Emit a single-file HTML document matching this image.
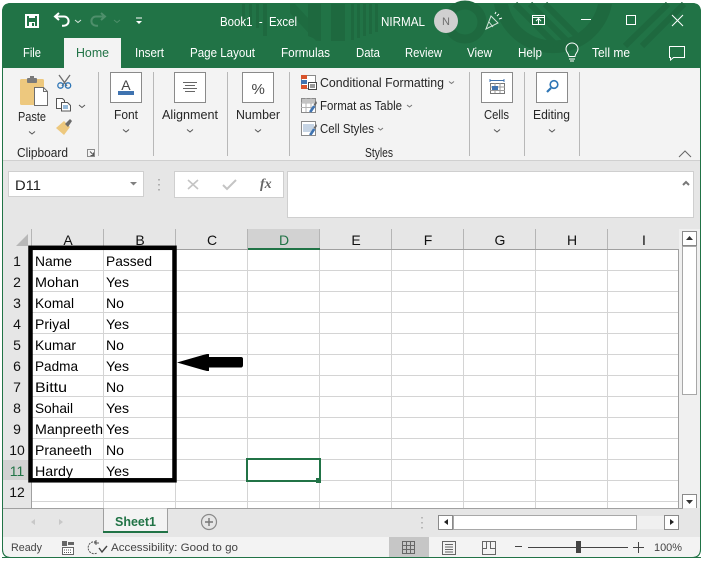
<!DOCTYPE html>
<html><head><meta charset="utf-8"><style>
html,body{margin:0;padding:0;background:#fff;width:703px;height:564px;overflow:hidden}
svg{display:block}
text{font-family:"Liberation Sans",sans-serif;white-space:pre}
.t{fill:#fff;font-size:12.5px}
.r{fill:#262626;font-size:12.5px}
.c{fill:#000;font-size:14px}
.h{fill:#111;font-size:14px}
.ln{stroke:#d4d4d4;stroke-width:1}
.box{fill:#fff;stroke:#8a8a8a;stroke-width:1}
.chev{fill:none;stroke:#555;stroke-width:1}
</style></head><body>
<svg width="703" height="564" viewBox="0 0 703 564" xmlns="http://www.w3.org/2000/svg">
<rect width="703" height="564" fill="#fff"/>
<path d="M2.5 12Q2.5 3.5 11 3.5H692Q700.5 3.5 700.5 12V549Q700.5 557.5 692 557.5H11Q2.5 557.5 2.5 549Z" fill="#e6e6e6" stroke="#217346"/>
<path d="M2 12Q2 3 11 3H692Q701 3 701 12V68H2Z" fill="#217346"/>
<!-- title pattern -->
<g fill="#1e693f">
<rect x="242" y="4" width="3" height="20"/><rect x="249" y="4" width="3" height="22"/><rect x="256" y="4" width="3" height="24"/><rect x="263" y="4" width="4" height="32"/>
<path d="M290 4h5l25 27v10h-4L290 13Z" opacity=".8"/>
<path d="M308 4h13v37l-13-5Z"/><path d="M331 4h14v37h-14Z"/>
<rect x="351" y="4" width="3" height="36"/><rect x="357" y="4" width="3" height="34"/><rect x="363" y="4" width="3" height="32"/><rect x="369" y="4" width="3" height="30"/><rect x="375" y="4" width="3" height="28"/>
</g>
<circle cx="465" cy="22" r="17" fill="none" stroke="#1e693f" stroke-width="9"/>
<path d="M494 4A60 60 0 0 0 612 4H598A46 46 0 0 1 508 4Z" fill="#1e693f"/>
<g stroke="#1e693f" stroke-width="6" fill="none"><path d="M515 4L556 45M530 4L568 42M545 4L576 35"/><path d="M625 46L668 4M642 46L684 4"/></g>
<!-- QAT -->
<rect x="26" y="15" width="12" height="12" fill="none" stroke="#fff" stroke-width="2"/>
<rect x="29" y="15" width="6" height="3" fill="#fff"/><rect x="29" y="22" width="6" height="5" fill="#fff"/><rect x="32" y="23" width="2" height="3" fill="#217346"/>
<path d="M55 16.500h9a4.600 4.600 0 0 1 0 9.200h-2M59 13l-4 3.500 4 3.500" fill="none" stroke="#fff" stroke-width="2"/>
<path d="M75 20l3 2.500 3-2.500" fill="none" stroke="#d8e6dd"/>
<path d="M105 16.500h-9a4.600 4.600 0 0 0 0 9.200h2M101 13l4 3.500-4 3.500" fill="none" stroke="#4e8f6b" stroke-width="2"/>
<path d="M114 20l3 2.500 3-2.500" fill="none" stroke="#4e8f6b"/>
<path d="M136 18h6" stroke="#fff"/><path d="M136 21h6l-3 3z" fill="#fff"/>
<text x="220" y="26" class="t" textLength="77" lengthAdjust="spacingAndGlyphs">Book1  -  Excel</text>
<text x="381" y="26" class="t" textLength="44" lengthAdjust="spacingAndGlyphs">NIRMAL</text>
<circle cx="446" cy="21" r="12" fill="#d0d0d0"/><text x="442" y="25" fill="#6e6e6e" style="font-size:11px">N</text>
<g fill="none" stroke="#d7e5dc" stroke-width="1"><path d="M486 29l5-13 7 7zM489 22l4 5M492 17l4 4"/></g><path d="M497 16l2-2M499 19l3-1M495 14l1-2" stroke="#fff" fill="none"/>
<g fill="none" stroke="#fff"><rect x="532.500" y="15.500" width="12" height="9"/><path d="M532 17.500h13M538.500 24v-5M536 21l2.500-2.500 2.500 2.500"/></g>
<path d="M581 19.500h10" stroke="#fff"/><rect x="626.500" y="15.500" width="9" height="9" fill="none" stroke="#fff" stroke-width="1"/>
<path d="M672 15l11 11M683 15l-11 11" stroke="#fff" fill="none"/>
<!-- tabs -->
<rect x="64" y="38" width="57" height="30" fill="#f3f3f3"/>
<text x="23" y="57" class="t" textLength="18" lengthAdjust="spacingAndGlyphs">File</text>
<text x="76" y="57" class="t" style="fill:#217346" textLength="33" lengthAdjust="spacingAndGlyphs">Home</text>
<text x="135" y="57" class="t" textLength="29" lengthAdjust="spacingAndGlyphs">Insert</text>
<text x="190" y="57" class="t" textLength="65" lengthAdjust="spacingAndGlyphs">Page Layout</text>
<text x="281" y="57" class="t" textLength="49" lengthAdjust="spacingAndGlyphs">Formulas</text>
<text x="356" y="57" class="t" textLength="24" lengthAdjust="spacingAndGlyphs">Data</text>
<text x="405" y="57" class="t" textLength="37" lengthAdjust="spacingAndGlyphs">Review</text>
<text x="467" y="57" class="t" textLength="25" lengthAdjust="spacingAndGlyphs">View</text>
<text x="518" y="57" class="t" textLength="24" lengthAdjust="spacingAndGlyphs">Help</text>
<path d="M569 56.500c0-3-3-4-3-7.500a6 6 0 0 1 12 0c0 3.500-3 4.500-3 7.500zM569 59h6M570 61h4" fill="none" stroke="#fff"/>
<text x="592" y="57" class="t" textLength="38" lengthAdjust="spacingAndGlyphs">Tell me</text>
<path d="M669.500 46.500h15v11h-11l-3 2.500v-2.500h-1z" fill="none" stroke="#fff"/>
<!-- ribbon -->
<rect x="3" y="68" width="697" height="92" fill="#f3f3f3"/>
<rect x="3" y="160" width="697" height="1" fill="#d0d0d0"/>
<g fill="#b8b8b8"><rect x="98" y="72" width="1" height="84"/><rect x="153" y="72" width="1" height="84"/><rect x="227" y="72" width="1" height="84"/><rect x="289" y="72" width="1" height="84"/><rect x="469" y="72" width="1" height="84"/><rect x="524" y="72" width="1" height="84"/><rect x="579" y="72" width="1" height="84"/></g>
<!-- clipboard -->
<rect x="20" y="79" width="24" height="26" rx="1.500" fill="#edc87e"/>
<rect x="27" y="78" width="10" height="5" rx="1" fill="#7a7a7a"/><rect x="30" y="76" width="4" height="3" fill="#7a7a7a"/>
<path d="M34.500 87.500h9l4 4v14h-13z" fill="#fff" stroke="#6e6e6e"/><path d="M43.500 87.500v4h4" fill="none" stroke="#6e6e6e"/>
<text x="18" y="121" class="r" textLength="28" lengthAdjust="spacingAndGlyphs">Paste</text>
<path d="M29 131.500l3 2.500 3-2.500" class="chev"/>
<g fill="none" stroke="#6e6e6e" stroke-width="1.300"><path d="M59 75l8 11M70 75l-8 11"/></g>
<circle cx="60.500" cy="85.500" r="2.700" fill="none" stroke="#2e75b5" stroke-width="1.300"/><circle cx="68" cy="85.500" r="2.700" fill="none" stroke="#2e75b5" stroke-width="1.300"/>
<path d="M56.500 98.500h6l2 2v8h-8z" fill="#fff" stroke="#555"/><path d="M61.500 102.500h6l3 3v5.500h-9z" fill="#fff" stroke="#555"/><path d="M63 106h5M63 108h5" stroke="#2e75b5"/>
<path d="M79 105l3 2.500 3-2.500" class="chev"/>
<path d="M56 128l8-7 6 6-6 8z" fill="#edc87e"/><path d="M65 124l5-5 2 2-4 6z" fill="#6b6b6b"/>
<text x="17" y="157" class="r" textLength="51" lengthAdjust="spacingAndGlyphs">Clipboard</text>
<path d="M87.500 149.500h7v7h-7z" fill="none" stroke="#8a8a8a"/><path d="M90 151.500l3.500 3.500M93.500 152.500v3h-3" fill="none" stroke="#555"/>
<!-- Font -->
<rect x="110.500" y="72.500" width="31" height="30" class="box"/>
<text x="121.300" y="90" style="font-size:14px;fill:#444">A</text><rect x="118" y="91" width="16" height="4" fill="#3f73b0"/>
<text x="114" y="119" class="r" textLength="24" lengthAdjust="spacingAndGlyphs">Font</text>
<path d="M123 129.500l3 2.500 3-2.500" class="chev"/>
<!-- Alignment -->
<rect x="174.500" y="72.500" width="31" height="30" class="box"/>
<path d="M183 82.500h14M185 85.500h10M183 88.500h14M185 91.500h10" stroke="#666"/>
<text x="162" y="119" class="r" textLength="56" lengthAdjust="spacingAndGlyphs">Alignment</text>
<path d="M187 129.500l3 2.500 3-2.500" class="chev"/>
<!-- Number -->
<rect x="242.500" y="72.500" width="31" height="30" class="box"/>
<text x="251.500" y="94" style="font-size:15px;fill:#444">%</text>
<text x="236" y="119" class="r" textLength="44" lengthAdjust="spacingAndGlyphs">Number</text>
<path d="M255 129.500l3 2.500 3-2.500" class="chev"/>
<!-- Styles -->
<rect x="301.500" y="75.500" width="14" height="13" fill="#fff" stroke="#8a8a8a"/><rect x="301" y="75" width="6" height="4" fill="#d8532b"/><rect x="301" y="80" width="6" height="4" fill="#3f73b0"/><rect x="301" y="85" width="6" height="4" fill="#d8532b"/>
<rect x="308.500" y="82.500" width="8" height="7" fill="#fff" stroke="#444"/><path d="M310 85h5M310 87h5" stroke="#333"/>
<text x="320" y="87" class="r" textLength="124" lengthAdjust="spacingAndGlyphs">Conditional Formatting</text>
<path d="M449 81.500l2.500 2 2.500-2" class="chev" style="stroke:#777"/>
<path d="M301.500 98.500h14v14h-14z" fill="#fff" stroke="#8a8a8a"/><path d="M301 103h14M301 107.500h14M306 98v14M311 98v14" stroke="#b4b4b4"/><rect x="302" y="99" width="13" height="4" fill="#c3c3c3"/>
<path d="M309 111.500l4-6 2.500 1-4 6z" fill="#3f73b0"/><path d="M313.500 105l2.500-4 1 2-2 3z" fill="#666"/>
<text x="320" y="110" class="r" textLength="82" lengthAdjust="spacingAndGlyphs">Format as Table</text>
<path d="M407 105l2.500 2 2.500-2" class="chev" style="stroke:#777"/>
<path d="M301.500 121.500h14v14h-14z" fill="#fff" stroke="#8a8a8a"/><rect x="303" y="124" width="11" height="8" fill="#c6d4e4"/>
<path d="M309 134.500l4-6 2.500 1-4 6z" fill="#3f73b0"/><path d="M313.500 128l2.500-4 1 2-2 3z" fill="#666"/>
<text x="320" y="133" class="r" textLength="54" lengthAdjust="spacingAndGlyphs">Cell Styles</text>
<path d="M378 128l2.500 2 2.500-2" class="chev" style="stroke:#777"/>
<text x="365" y="157" class="r" textLength="28" lengthAdjust="spacingAndGlyphs">Styles</text>
<!-- Cells -->
<rect x="481.500" y="72.500" width="31" height="30" class="box"/>
<path d="M490 80.500h14M490 79v3M504 79v3" stroke="#3f73b0"/>
<rect x="490.500" y="83.500" width="14" height="10" fill="#fff" stroke="#777"/><path d="M490 87h15M490 90.500h15M495 83v10M500 83v10" stroke="#999"/><rect x="492" y="86" width="6" height="4" fill="#3f73b0"/>
<text x="484" y="119" class="r" textLength="25" lengthAdjust="spacingAndGlyphs">Cells</text>
<path d="M494 129.500l3 2.500 3-2.500" class="chev"/>
<!-- Editing -->
<rect x="536.500" y="72.500" width="31" height="30" class="box"/>
<circle cx="554" cy="84.500" r="3.800" fill="none" stroke="#2e75b5" stroke-width="1.600"/><path d="M551 88l-4 4" stroke="#2e75b5" stroke-width="2.200"/>
<text x="533" y="119" class="r" textLength="37" lengthAdjust="spacingAndGlyphs">Editing</text>
<path d="M549 129.500l3 2.500 3-2.500" class="chev"/>
<path d="M679 157l6-6 6 6" fill="none" stroke="#666"/>
<!-- formula bar -->
<rect x="8.500" y="171.500" width="135" height="25" fill="#fff" stroke="#cfcfcf"/>
<text x="15" y="190" style="font-size:13.500px;fill:#222" textLength="26" lengthAdjust="spacingAndGlyphs">D11</text>
<path d="M130 182h7l-3.500 3.500z" fill="#808080"/>
<path d="M159 179v1.500M159 184v1.500M159 189v1.500" stroke="#b0b0b0" stroke-width="2"/>
<rect x="174.500" y="171.500" width="109" height="26" fill="#fff" stroke="#cfcfcf"/>
<path d="M188 180l10 9M198 180l-10 9" stroke="#c4c4c4" stroke-width="1.600" fill="none"/>
<path d="M223 185l4 4 9-9" stroke="#c4c4c4" stroke-width="2" fill="none"/>
<text x="260" y="188" style="font-family:'Liberation Serif',serif;font-style:italic;font-weight:bold;font-size:14px;fill:#666">fx</text>
<rect x="287.500" y="171.500" width="406" height="46" fill="#fff" stroke="#cfcfcf"/>
<path d="M683 185l3-3 3 3" fill="none" stroke="#777" stroke-width="2"/>
<!-- headers -->
<rect x="3" y="229" width="697" height="20" fill="#e6e6e6"/>
<rect x="248" y="229" width="72" height="20" fill="#d2d2d2"/>
<rect x="3" y="250" width="28" height="258" fill="#e6e6e6"/>
<rect x="3" y="460" width="28" height="20" fill="#d2d2d2"/>
<path d="M28 234v12H16z" fill="#b8b8b8"/>
<rect x="32" y="250" width="647" height="258" fill="#fff"/>
<g fill="#b5b5b5"><rect x="31" y="229" width="1" height="21"/><rect x="103" y="229" width="1" height="20"/><rect x="175" y="229" width="1" height="20"/><rect x="247" y="229" width="1" height="20"/><rect x="319" y="229" width="1" height="20"/><rect x="391" y="229" width="1" height="20"/><rect x="463" y="229" width="1" height="20"/><rect x="535" y="229" width="1" height="20"/><rect x="607" y="229" width="1" height="20"/></g>
<rect x="31" y="249" width="649" height="1" fill="#a0a0a0"/>
<rect x="31" y="250" width="1" height="258" fill="#a0a0a0"/>
<rect x="248" y="248" width="72" height="2" fill="#217346"/>
<!-- grid -->
<g fill="#d4d4d4">
<rect x="103" y="250" width="1" height="258"/><rect x="175" y="250" width="1" height="258"/><rect x="247" y="250" width="1" height="258"/><rect x="319" y="250" width="1" height="258"/><rect x="391" y="250" width="1" height="258"/><rect x="463" y="250" width="1" height="258"/><rect x="535" y="250" width="1" height="258"/><rect x="607" y="250" width="1" height="258"/>
<rect x="32" y="270" width="647" height="1"/><rect x="32" y="291" width="647" height="1"/><rect x="32" y="312" width="647" height="1"/><rect x="32" y="333" width="647" height="1"/><rect x="32" y="354" width="647" height="1"/><rect x="32" y="375" width="647" height="1"/><rect x="32" y="396" width="647" height="1"/><rect x="32" y="417" width="647" height="1"/><rect x="32" y="438" width="647" height="1"/><rect x="32" y="459" width="647" height="1"/><rect x="32" y="480" width="647" height="1"/><rect x="32" y="501" width="647" height="1"/>
</g>
<rect x="679" y="229" width="21" height="280" fill="#f0f0f0"/>
<rect x="678" y="250" width="1" height="258" fill="#a0a0a0"/>
<!-- col letters -->
<g text-anchor="middle"><text x="68" y="245" class="h">A</text><text x="140" y="245" class="h">B</text><text x="212" y="245" class="h">C</text><text x="284" y="245" class="h" style="fill:#217346">D</text><text x="356" y="245" class="h">E</text><text x="428" y="245" class="h">F</text><text x="500" y="245" class="h">G</text><text x="572" y="245" class="h">H</text><text x="644" y="245" class="h">I</text></g>
<g text-anchor="middle"><text x="17" y="266" class="h">1</text><text x="17" y="287" class="h">2</text><text x="17" y="308" class="h">3</text><text x="17" y="329" class="h">4</text><text x="17" y="350" class="h">5</text><text x="17" y="371" class="h">6</text><text x="17" y="392" class="h">7</text><text x="17" y="413" class="h">8</text><text x="17" y="434" class="h">9</text><text x="17" y="455" class="h">10</text><text x="17" y="476" class="h" style="fill:#217346">11</text><text x="17" y="497" class="h">12</text></g>
<!-- cells -->
<text x="35" y="266" class="c" textLength="37" lengthAdjust="spacingAndGlyphs">Name</text><text x="106" y="266" class="c" textLength="46" lengthAdjust="spacingAndGlyphs">Passed</text>
<text x="35" y="287" class="c" textLength="44" lengthAdjust="spacingAndGlyphs">Mohan</text><text x="106" y="287" class="c" textLength="23" lengthAdjust="spacingAndGlyphs">Yes</text>
<text x="35" y="308" class="c" textLength="39" lengthAdjust="spacingAndGlyphs">Komal</text><text x="106" y="308" class="c" textLength="18" lengthAdjust="spacingAndGlyphs">No</text>
<text x="35" y="329" class="c" textLength="35" lengthAdjust="spacingAndGlyphs">Priyal</text><text x="106" y="329" class="c" textLength="23" lengthAdjust="spacingAndGlyphs">Yes</text>
<text x="35" y="350" class="c" textLength="41" lengthAdjust="spacingAndGlyphs">Kumar</text><text x="106" y="350" class="c" textLength="18" lengthAdjust="spacingAndGlyphs">No</text>
<text x="35" y="371" class="c" textLength="43" lengthAdjust="spacingAndGlyphs">Padma</text><text x="106" y="371" class="c" textLength="23" lengthAdjust="spacingAndGlyphs">Yes</text>
<text x="35" y="392" class="c" textLength="32" lengthAdjust="spacingAndGlyphs">Bittu</text><text x="106" y="392" class="c" textLength="18" lengthAdjust="spacingAndGlyphs">No</text>
<text x="35" y="413" class="c" textLength="38" lengthAdjust="spacingAndGlyphs">Sohail</text><text x="106" y="413" class="c" textLength="23" lengthAdjust="spacingAndGlyphs">Yes</text>
<text x="35" y="434" class="c" textLength="68" lengthAdjust="spacingAndGlyphs">Manpreeth</text><text x="106" y="434" class="c" textLength="23" lengthAdjust="spacingAndGlyphs">Yes</text>
<text x="35" y="455" class="c" textLength="57" lengthAdjust="spacingAndGlyphs">Praneeth</text><text x="106" y="455" class="c" textLength="18" lengthAdjust="spacingAndGlyphs">No</text>
<text x="35" y="476" class="c" textLength="38" lengthAdjust="spacingAndGlyphs">Hardy</text><text x="106" y="476" class="c" textLength="23" lengthAdjust="spacingAndGlyphs">Yes</text>
<!-- annotation box -->
<rect x="30.500" y="247.800" width="144" height="232.500" fill="none" stroke="#000" stroke-width="4.500"/>
<path d="M177 362.500L203 355L207 354H209V357H241Q243 357 243 359V365Q243 367.500 241 367.500H209V371H207L203 370Z" fill="#000"/>
<!-- selection -->
<rect x="247" y="459" width="73" height="22" fill="none" stroke="#217346" stroke-width="2"/>
<rect x="316" y="478" width="5" height="5" fill="#217346"/>
<!-- v scrollbar -->
<rect x="682.500" y="231.500" width="14" height="14" fill="#fff" stroke="#8a8a8a"/><path d="M686 240h7l-3.500-4z" fill="#333"/>
<rect x="682.500" y="246.500" width="14" height="148" fill="#fff" stroke="#a8a8a8"/>
<rect x="682.500" y="494.500" width="14" height="14" fill="#fff" stroke="#8a8a8a"/><path d="M686 500h7l-3.500 4z" fill="#333"/>
<!-- sheet bar -->
<rect x="3" y="508" width="697" height="29" fill="#e6e6e6"/>
<rect x="3" y="508" width="680" height="1" fill="#a0a0a0"/>
<path d="M35 519v6l-4-3zM59 519v6l4-3z" fill="#c8c8c8"/>
<path d="M103.500 508.500V532.500H167.500V508.500" fill="#f3f3f3" stroke="#a0a0a0"/>
<rect x="103" y="531" width="65" height="2" fill="#217346"/>
<text x="115" y="526" style="font-size:12.500px;font-weight:bold;fill:#217346" textLength="41" lengthAdjust="spacingAndGlyphs">Sheet1</text>
<circle cx="209" cy="522" r="7.500" fill="none" stroke="#8a8a8a" stroke-width="1.200"/><path d="M205 522h8M209 518v8" stroke="#777" stroke-width="1.400"/>
<path d="M422 517v1.500M422 522v1.500M422 527v1.500" stroke="#b8b8b8" stroke-width="2"/>
<rect x="438.500" y="515.500" width="14" height="14" fill="#fff" stroke="#8a8a8a"/><path d="M448 519v6l-4-3z" fill="#222"/>
<rect x="453.500" y="515.500" width="183" height="14" fill="#fff" stroke="#a8a8a8"/>
<rect x="637" y="516" width="27" height="13" fill="#f0f0f0"/>
<rect x="664.500" y="515.500" width="14" height="14" fill="#fff" stroke="#8a8a8a"/><path d="M670 519v6l4-3z" fill="#222"/>
<!-- status bar -->
<path d="M3 537H700V549Q700 557 692 557H11Q3 557 3 549Z" fill="#f3f3f3"/>
<rect x="2" y="557" width="699" height="1" fill="#217346"/>
<text x="11" y="551" style="font-size:11px;fill:#444" textLength="31" lengthAdjust="spacingAndGlyphs">Ready</text>
<rect x="62" y="541" width="5" height="5" fill="#666"/><rect x="62.500" y="547.500" width="11" height="7" fill="#fff" stroke="#666" stroke-width="1"/><path d="M64 550h8M64 552.500h8" stroke="#555" stroke-dasharray="1 1"/>
<rect x="68" y="542" width="6" height="3" fill="#666"/>
<path d="M96 542a6 6 0 1 0 1 11" fill="none" stroke="#555" stroke-dasharray="2 1"/><path d="M99 548l3 4 5-6" fill="none" stroke="#444" stroke-width="1.400"/><path d="M96 540v5M94 543h5" stroke="#555"/>
<text x="111" y="551" style="font-size:11px;fill:#444" textLength="127" lengthAdjust="spacingAndGlyphs">Accessibility: Good to go</text>
<rect x="389" y="537" width="40" height="20" fill="#c6c6c6"/>
<g fill="none" stroke="#666"><rect x="402.500" y="541.500" width="12" height="12"/><path d="M406.500 541v13M410.500 541v13M402 545.500h13M402 549.500h13"/>
<rect x="442.500" y="541.500" width="13" height="13"/><path d="M445 544.500h8M445 547h8M445 549.500h8M445 552h8"/>
<path d="M482.500 541.500h13v13h-13zM482.500 548.500h4v-7M490.500 541.500v7h5"/></g>
<path d="M515 546.500h7M528 547.500h100M633 547.500h11M638.500 542v11" stroke="#444"/>
<rect x="576" y="541" width="5" height="12" fill="#444"/>
<text x="654" y="551" style="font-size:11px;fill:#444" textLength="28" lengthAdjust="spacingAndGlyphs">100%</text>
<!-- window edge -->
<path d="M2.500 68V549Q2.500 557.500 11 557.500H692Q700.500 557.500 700.500 549V68" fill="none" stroke="#217346"/>
</svg>
</body></html>
